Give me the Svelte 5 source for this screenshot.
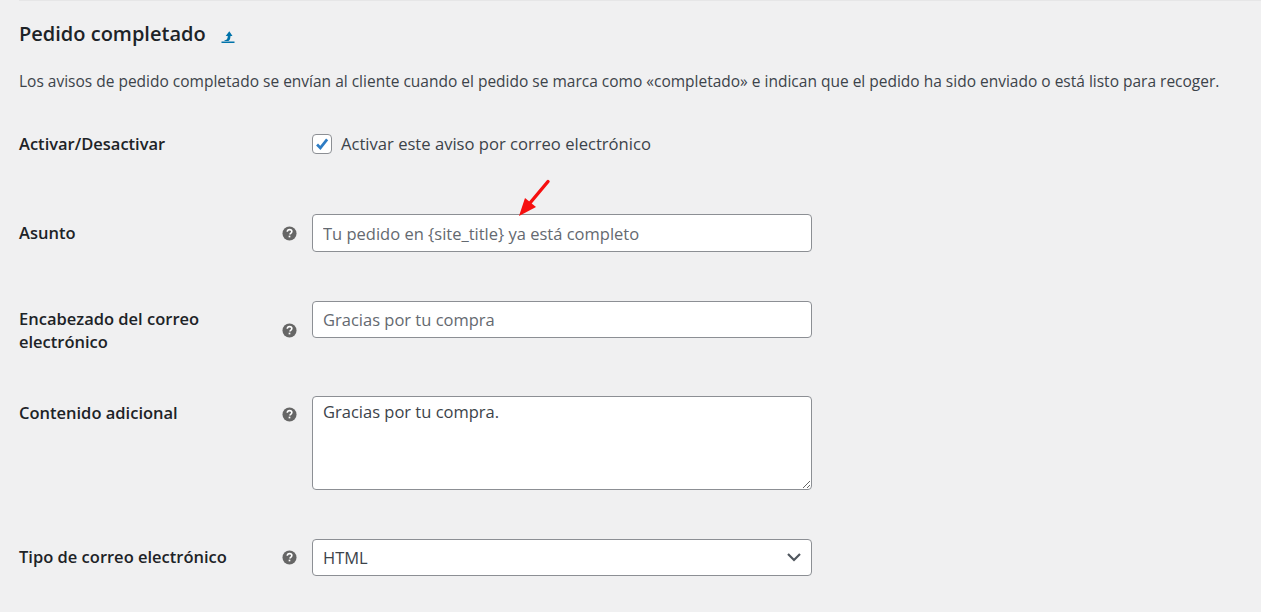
<script>
  let subject = '';
  let heading = '';
  let extra = 'Gracias por tu compra.';
  let enabled = true;
</script>

{#snippet help()}
  <svg class="help" viewBox="0 0 16 16" aria-hidden="true">
    <circle cx="8" cy="8" r="7.5" fill="#666" />
    <path d="M5.6 6.2c.1-1.5 1.1-2.3 2.5-2.3 1.4 0 2.4.8 2.4 2 0 1-.6 1.5-1.2 1.9-.6.4-.8.7-.8 1.3" fill="none" stroke="#fff" stroke-width="1.7" />
    <rect x="7.1" y="10.3" width="1.8" height="1.8" fill="#fff" />
  </svg>
{/snippet}

<main class="page">
  <div class="rule"></div>
  <h2>Pedido completado <a href="#up" class="up" aria-label="Volver">
    <svg viewBox="0 0 14 14" width="14" height="14" aria-hidden="true">
      <path d="M3.500 10.300c1.900-.1 3-.8 3.300-4.300H4.700L8.300 1.300 11.500 6H9.500c-.2 3.500-1 4.800-2.500 5H3.500z" fill="#0073aa" />
      <rect x="0.500" y="11.500" width="13" height="1.500" fill="#0073aa" />
    </svg>
  </a></h2>
  <p class="desc">Los avisos de pedido completado se envían al cliente cuando el pedido se marca como «completado» e indican que el pedido ha sido enviado o está listo para recoger.</p>

  <div class="form">
    <div class="row first">
      <span class="label">Activar/Desactivar</span>
      <span></span>
      <label class="check">
        <input type="checkbox" bind:checked={enabled} />
        <span class="box">
          {#if enabled}
            <svg viewBox="0 0 20 20" width="20" height="20" aria-hidden="true"><path d="M4.500 10.500l3.700 3.800 7.500-9.500" fill="none" stroke="#2d7cc4" stroke-width="3" /></svg>
          {/if}
        </span>
        Activar este aviso por correo electrónico
      </label>
    </div>

    <div class="row second">
      <span class="label">Asunto</span>
      {@render help()}
      <div class="field">
        <input type="text" bind:value={subject} placeholder="Tu pedido en &#123;site_title&#125; ya está completo" />
        <svg class="arrow" viewBox="0 0 36 40" width="36" height="40" aria-hidden="true">
          <path d="M32 3.500L14 25" stroke="#f60f0f" stroke-width="3.400" stroke-linecap="round" />
          <path d="M3 38L9 20 20 29z" fill="#f60f0f" />
        </svg>
      </div>
    </div>

    <div class="row third top">
      <span class="label">Encabezado del correo electrónico</span>
      {@render help()}
      <input type="text" bind:value={heading} placeholder="Gracias por tu compra" />
    </div>

    <div class="row fourth top">
      <span class="label">Contenido adicional</span>
      {@render help()}
      <textarea bind:value={extra}></textarea>
    </div>

    <div class="row fifth">
      <span class="label">Tipo de correo electrónico</span>
      {@render help()}
      <div class="field">
        <select>
          <option>HTML</option>
          <option>Texto plano</option>
        </select>
        <svg class="chev" viewBox="0 0 16 10" width="16" height="10" aria-hidden="true"><path d="M2 2l6 6 6-6" fill="none" stroke="#50575e" stroke-width="2.200" /></svg>
      </div>
    </div>
  </div>
</main>

<style>
  :global(body) {
    background: #f0f0f1;
    color: #1d2327;
    font-family: "Open Sans", "Noto Sans", sans-serif;
  }

  .page {
    height: 612px;
    padding: 0 0 0 19px;
    box-sizing: border-box;
    overflow: hidden;
  }

  .rule {
    height: 1px;
    background: #e6e6e7;
  }

  h2 {
    margin: 21px 0 0;
    font-size: 20px;
    line-height: 24px;
    font-weight: 600;
    display: flex;
    align-items: center;
    gap: 15px;
  }

  .up {
    display: flex;
    margin-top: 5px;
  }

  .desc {
    margin: 25px 0 0;
    font-size: 15.5px;
    line-height: 20px;
    color: #3c434a;
    white-space: nowrap;
  }

  .row {
    display: grid;
    grid-template-columns: 263px 30px 500px;
    align-items: center;
  }

  .first { margin-top: 41px; }
  .second { margin-top: 59px; }
  .third { margin-top: 49px; }
  .fourth { margin-top: 43px; }
  .fifth { margin-top: 49px; }

  .top { align-items: start; }
  .second .label, .fifth .label { margin-bottom: 2px; }
  .third .label { margin-top: 6px; }
  .third .help { margin-top: 22px; }
  .fourth .label { margin-top: 5px; }
  .fourth .help { margin-top: 11px; }

  .label {
    font-size: 16.5px;
    line-height: 23px;
    font-weight: 600;
    width: 230px;
  }

  .help {
    width: 15px;
    height: 15px;
  }

  .check {
    display: flex;
    align-items: center;
    gap: 9px;
    font-size: 16.6px;
    line-height: 22px;
    color: #3c434a;
  }

  .check input {
    position: absolute;
    opacity: 0;
  }

  .box {
    width: 18px;
    height: 18px;
    border: 1px solid #8c8f94;
    border-radius: 4px;
    background: #fff;
    display: flex;
    align-items: center;
    justify-content: center;
  }

  .field {
    position: relative;
  }

  input[type="text"], select, textarea {
    display: block;
    box-sizing: border-box;
    width: 500px;
    border: 1px solid #8c8f94;
    border-radius: 4px;
    background: #fff;
    color: #3c434a;
    font: inherit;
    font-size: 16.5px;
    padding: 0 10px;
    margin: 0;
    outline: none;
  }

  input[type="text"] { height: 37px; }
  .second input[type="text"] { height: 38px; }

  input::placeholder {
    color: #646970;
    opacity: 1;
  }

  textarea {
    height: 94px;
    padding: 4px 10px;
    line-height: 22px;
  }

  select {
    height: 37px;
    appearance: none;
  }

  .chev {
    position: absolute;
    right: 10px;
    top: 13px;
    pointer-events: none;
  }

  .arrow {
    position: absolute;
    left: 204px;
    top: -36px;
    pointer-events: none;
  }
</style>
